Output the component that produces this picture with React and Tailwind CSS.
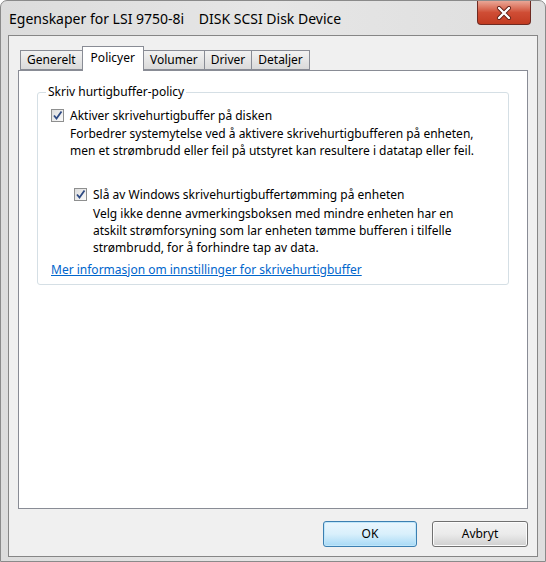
import React from "react";

const Check = () => (
  <span className="flex h-[13px] w-[13px] shrink-0 items-center justify-center border border-[#8e8f8f] bg-gradient-to-br from-[#dcdcdc] to-[#fbfbfb]">
    <svg width="11" height="11" viewBox="0 0 11 11">
      <path d="M2 5.5 L4.5 8.5 L9.5 1.5" fill="none" stroke="#2e4a83" strokeWidth="1.8" />
    </svg>
  </span>
);

const Tab = ({ label, active }) =>
  active ? (
    <div className="relative z-10 -mb-px -mr-px flex h-[25px] items-start border border-b-0 border-[#898c95] bg-white px-[8px] pt-[2px]">
      {label}
    </div>
  ) : (
    <div className="-mr-px flex h-[20px] items-center border border-[#898c95] bg-gradient-to-b from-[#f2f2f2] to-[#dadada] px-[6px]">
      {label}
    </div>
  );

export default function App() {
  return (
    <div
      className="flex h-[562px] w-[546px] flex-col rounded-t-[7px] border border-[#8a8a8a] bg-gradient-to-r from-[#dcdcdc] via-[#e6e6e6] to-[#dedede] text-[12px] text-black"
      style={{ fontFamily: '"Noto Sans", "Liberation Sans", sans-serif' }}
    >
      {/* Title bar */}
      <div className="flex h-[34px] items-start justify-between">
        <div className="whitespace-pre pl-[8px] pt-[8px] text-[14px] leading-[20px]">
          {"Egenskaper for LSI 9750-8i    DISK SCSI Disk Device"}
        </div>
        <div className="mr-[14px] flex h-[24px] w-[54px] items-center justify-center rounded-b-[4px] border border-t-0 border-[#6e2a22] bg-gradient-to-b from-[#e9a696] via-[#cf4d35] to-[#c23b21]">
          <svg width="16" height="14" viewBox="0 0 16 14">
            <path d="M3 2 L13 12 M13 2 L3 12" stroke="#5a1a10" strokeWidth="4" strokeLinecap="round" />
            <path d="M3 2 L13 12 M13 2 L3 12" stroke="#ffffff" strokeWidth="2.4" strokeLinecap="round" />
          </svg>
        </div>
      </div>

      {/* Client area */}
      <div className="mx-[7px] flex flex-1 flex-col border border-[#868686] bg-[#f0f0f0] px-[9px] pt-[10px]">
        <div className="flex h-[24px] items-end pl-[2px]">
          <Tab label="Generelt" />
          <Tab label="Policyer" active />
          <Tab label="Volumer" />
          <Tab label="Driver" />
          <Tab label="Detaljer" />
        </div>

        <div className="h-[439px] border border-[#898c95] bg-white px-[18px] pt-[13px]">
          <fieldset className="rounded-[3px] border border-[#d5dfe5] px-[13px] pb-[6px]">
            <legend className="ml-[-5px] px-[2px] leading-[16px]">Skriv hurtigbuffer-policy</legend>
            <div className="mt-[7px] flex items-center gap-[6px] leading-[17px]">
              <Check />
              <span>Aktiver skrivehurtigbuffer på disken</span>
            </div>
            <div className="mt-[1px] pl-[19px] leading-[17px]">
              Forbedrer systemytelse ved å aktivere skrivehurtigbufferen på enheten,
              <br />
              men et strømbrudd eller feil på utstyret kan resultere i datatap eller feil.
            </div>
            <div className="mt-[27px] flex items-center gap-[6px] pl-[23px] leading-[17px]">
              <Check />
              <span>Slå av Windows skrivehurtigbuffertømming på enheten</span>
            </div>
            <div className="mt-[2px] pl-[42px] leading-[17px]">
              Velg ikke denne avmerkingsboksen med mindre enheten har en
              <br />
              atskilt strømforsyning som lar enheten tømme bufferen i tilfelle
              <br />
              strømbrudd, for å forhindre tap av data.
            </div>
            <div className="mt-[5px] leading-[17px] text-[#0066cc] underline">
              Mer informasjon om innstillinger for skrivehurtigbuffer
            </div>
          </fieldset>
        </div>

        <div className="mt-[12px] flex justify-end gap-[15px]">
          <button className="h-[26px] w-[94px] rounded-[3px] border border-[#3c7fb1] bg-gradient-to-b from-[#eaf6fd] via-[#d9f0fc] to-[#a7d9f5] shadow-[inset_0_0_0_1px_#bfe6fa]">
            OK
          </button>
          <button className="h-[26px] w-[96px] rounded-[3px] border border-[#707070] bg-gradient-to-b from-[#f2f2f2] via-[#ebebeb] to-[#cfcfcf] shadow-[inset_0_0_0_1px_#fcfcfc]">
            Avbryt
          </button>
        </div>
      </div>
      <div className="h-[4px]" />
    </div>
  );
}
